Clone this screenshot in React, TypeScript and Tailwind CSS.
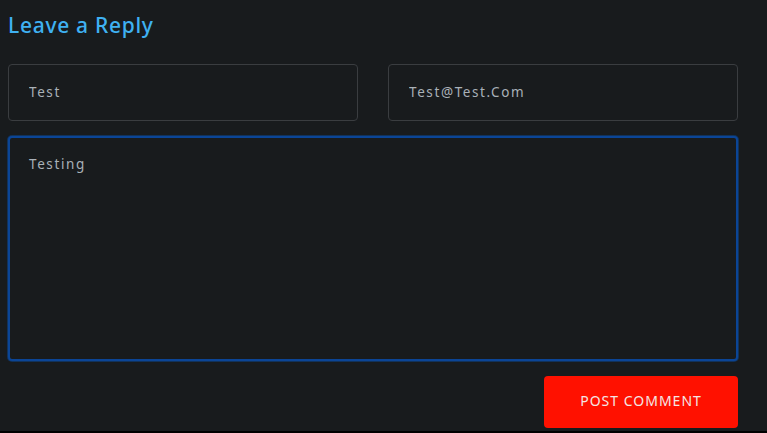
export default function App() {
  return (
    <div className="min-h-screen bg-black">
      <div className="h-[431px] bg-[#181b1d] pl-2 pr-[29px] pt-[11px] font-['Noto_Sans',sans-serif]">
        <h3 className="text-[21px] font-medium leading-[28px] text-[#3fb1f2] tracking-[0.7px]">
          Leave a Reply
        </h3>
        <form className="mt-[25px] flex flex-col">
          <div className="grid grid-cols-2 gap-[30px]">
            <input
              type="text"
              defaultValue="Test"
              className="h-[57px] rounded-[4px] border border-[#3a3d40] bg-[#181b1d] px-[20px] pb-[2px] text-[13.5px] tracking-[1.6px] text-[#a9b1b8] outline-none"
            />
            <input
              type="email"
              defaultValue="Test@Test.Com"
              className="h-[57px] rounded-[4px] border border-[#3a3d40] bg-[#181b1d] px-[20px] pb-[2px] text-[13.5px] tracking-[1.6px] text-[#a9b1b8] outline-none"
            />
          </div>
          <textarea
            defaultValue="Testing"
            className="mt-[15px] h-[225px] resize-none rounded-[4px] border-2 border-[#0b4596] bg-[#181b1d] px-[19px] pt-[16px] text-[13.5px] tracking-[1.6px] text-[#a9b1b8] outline-none shadow-[0_0_0_1px_#11325a]"
          />
          <div className="mt-[15px] flex justify-end">
            <button
              type="button"
              className="h-[52px] w-[194px] rounded-[4px] bg-[#ff1100] pb-[3px] text-[14px] tracking-[1px] text-[#f4e6e4]"
            >
              POST COMMENT
            </button>
          </div>
        </form>
      </div>
    </div>
  );
}
